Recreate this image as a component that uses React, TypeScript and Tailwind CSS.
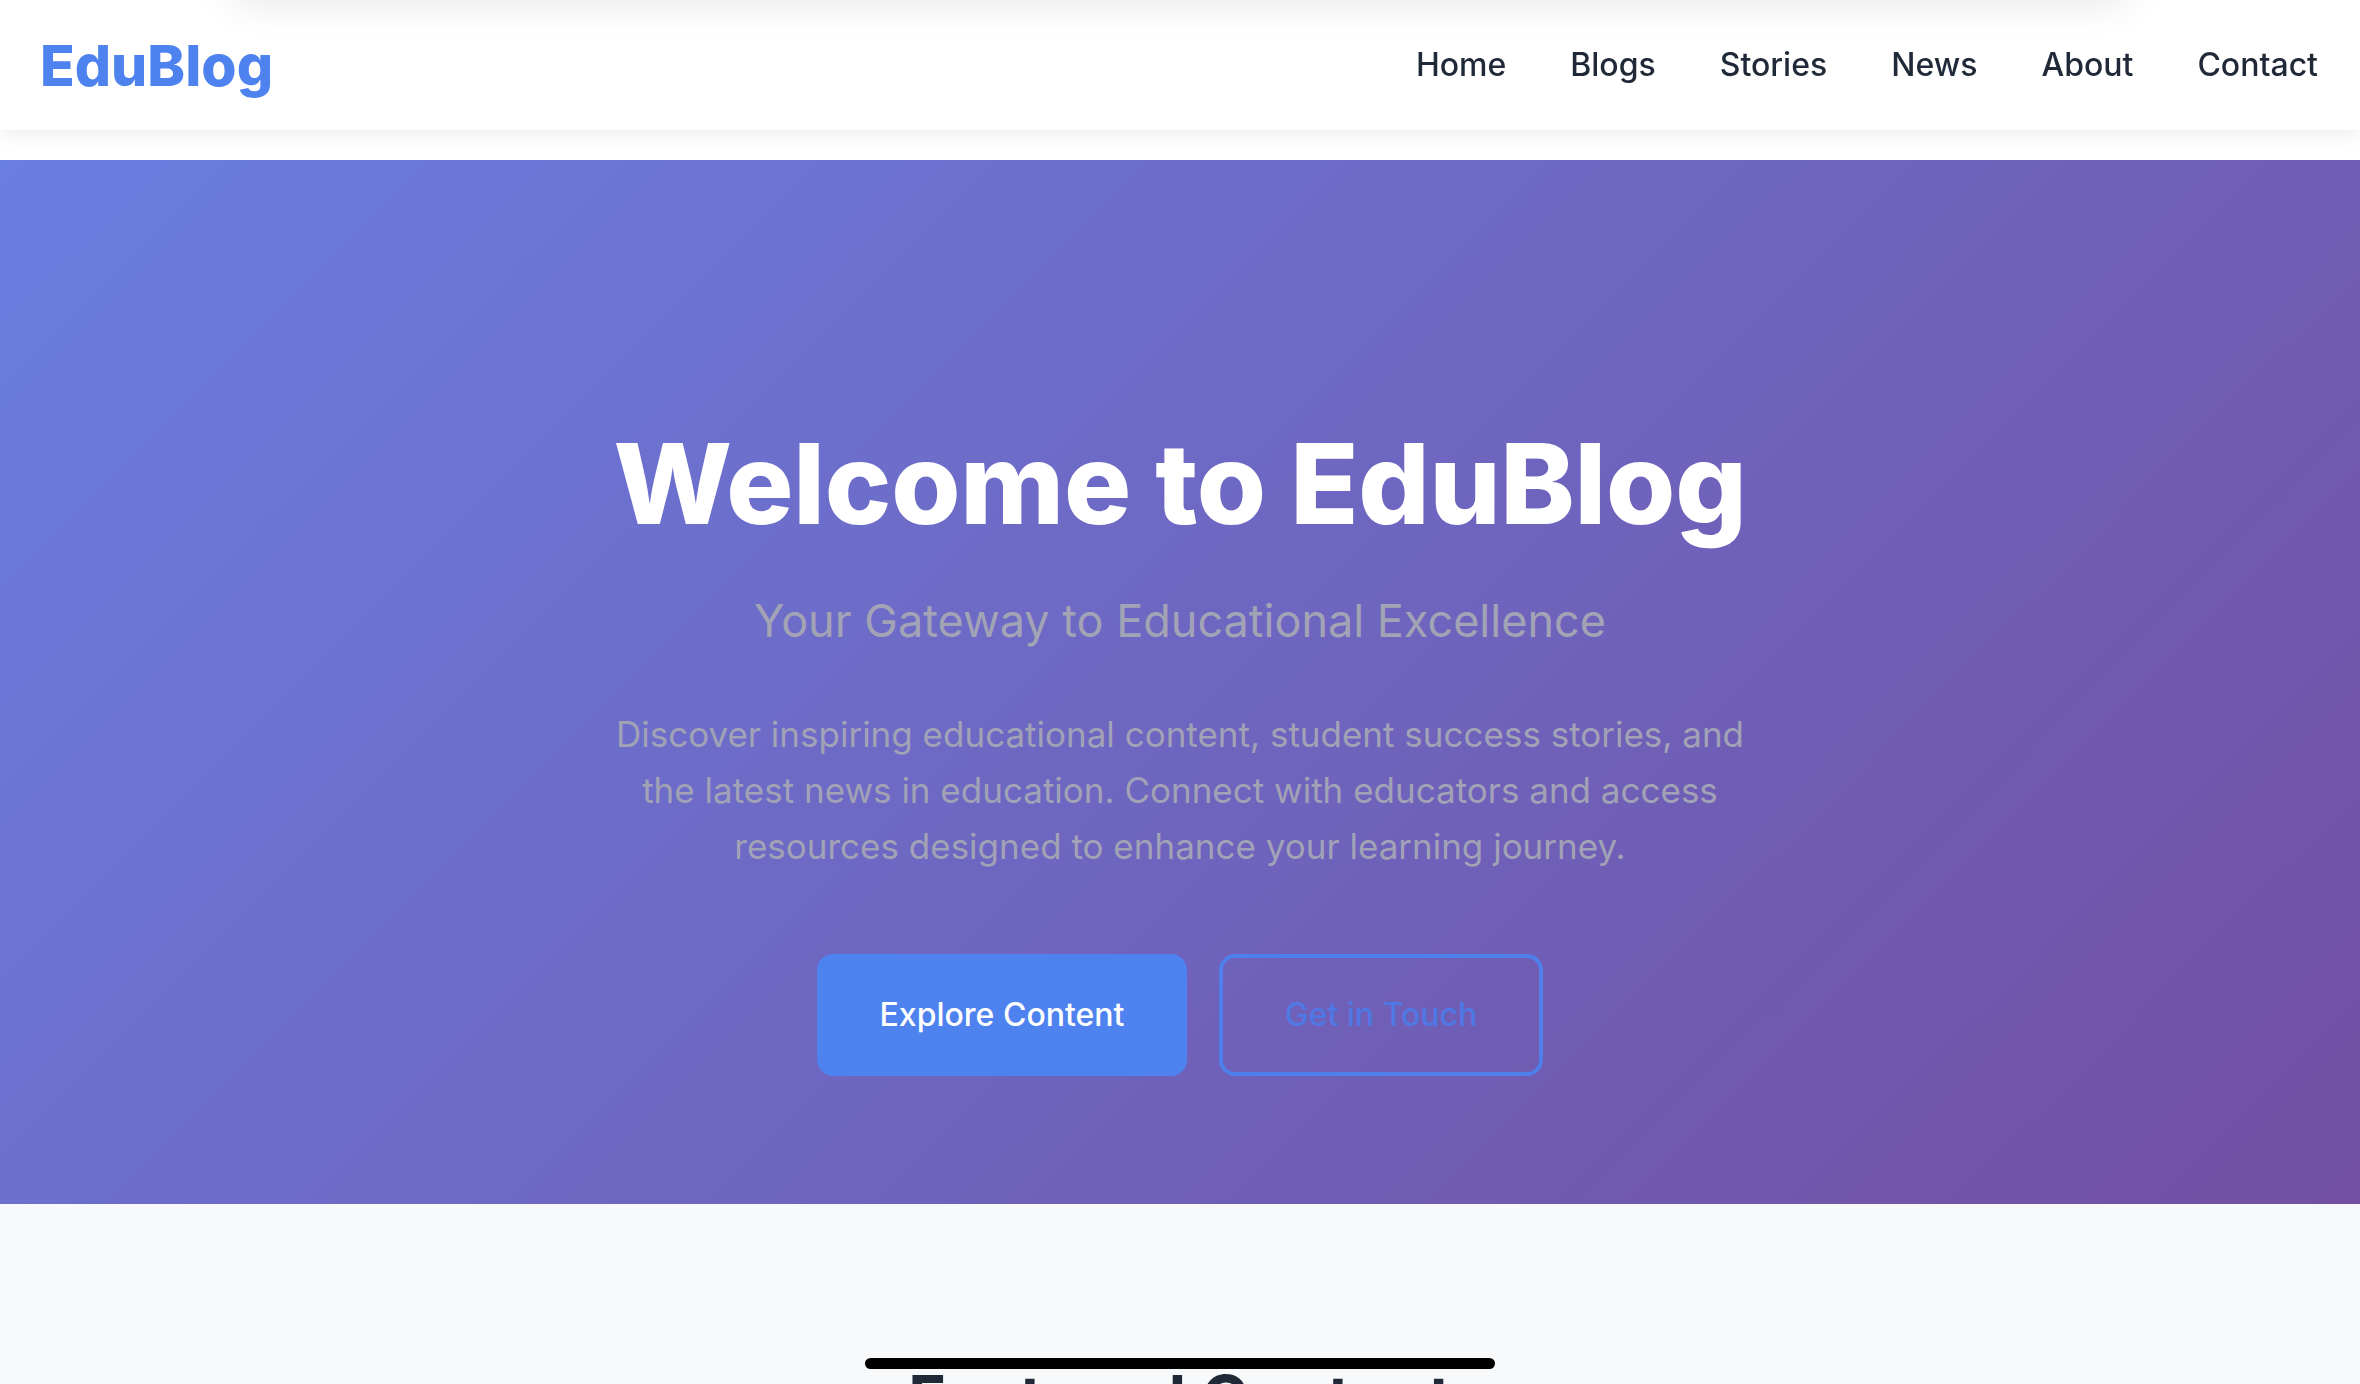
import React from "react";

const navLinks = ["Home", "Blogs", "Stories", "News", "About", "Contact"];

function Header() {
  return (
    <header className="fixed top-0 left-0 right-0 z-10 h-[130px] bg-white shadow-[0_4px_20px_rgba(0,0,0,0.08)]">
      {/* soft shade at the very top edge */}
      <div className="pointer-events-none absolute -top-[30px] left-[230px] right-[230px] h-[30px] rounded-full shadow-[0_0_40px_rgba(0,0,0,0.12)]" />
      <div className="flex h-full items-center justify-between pl-[40px] pr-[42px]">
        <a href="#" className="text-[57px] font-extrabold leading-none text-[#4e82ee]">
          EduBlog
        </a>
        <nav className="flex items-center gap-[64px]">
          {navLinks.map((link) => (
            <a key={link} href="#" className="text-[32px] font-medium text-[#1f2937]">
              {link}
            </a>
          ))}
        </nav>
      </div>
    </header>
  );
}

function Hero() {
  return (
    <section className="mt-[160px] flex flex-col items-center bg-[linear-gradient(135deg,#6a7ee0_0%,#724fa2_100%)] pt-[256px] pb-[128px] text-center">
      <h1 className="text-[112px] font-extrabold leading-[1.2] tracking-[-0.002em] text-white">
        Welcome to EduBlog
      </h1>
      <p className="mt-[42px] text-[45px] leading-[1.3] text-[#a3a3b6]">
        Your Gateway to Educational Excellence
      </p>
      <p className="mt-[55px] max-w-[1160px] text-[35px] leading-[1.6] text-[#a2a2b6]">
        Discover inspiring educational content, student success stories, and the latest news in
        education. Connect with educators and access resources designed to enhance your learning
        journey.
      </p>
      <div className="mt-[80px] flex gap-[32px]">
        <button className="h-[122px] w-[370px] rounded-[16px] border-4 border-[#4e82ee] bg-[#4e82ee] text-[32px] font-medium text-white">
          Explore Content
        </button>
        <button className="h-[122px] w-[324px] rounded-[16px] border-4 border-[#4f7fea] text-[32px] font-medium text-[#4f78e4]">
          Get in Touch
        </button>
      </div>
    </section>
  );
}

function Featured() {
  return (
    <section className="bg-[#f8f9fb] pt-[154px] pb-[120px]">
      <div className="mx-auto flex w-[630px] flex-col items-center">
        <div className="h-[11px] w-full rounded-full bg-black" />
        <h2 className="mt-[-2px] text-[64px] font-bold leading-none text-[#1f2937]">Featured Content</h2>
      </div>
    </section>
  );
}

export default function App() {
  return (
    <div className="min-h-screen bg-white font-['Inter',sans-serif]">
      <Header />
      <Hero />
      <Featured />
    </div>
  );
}
